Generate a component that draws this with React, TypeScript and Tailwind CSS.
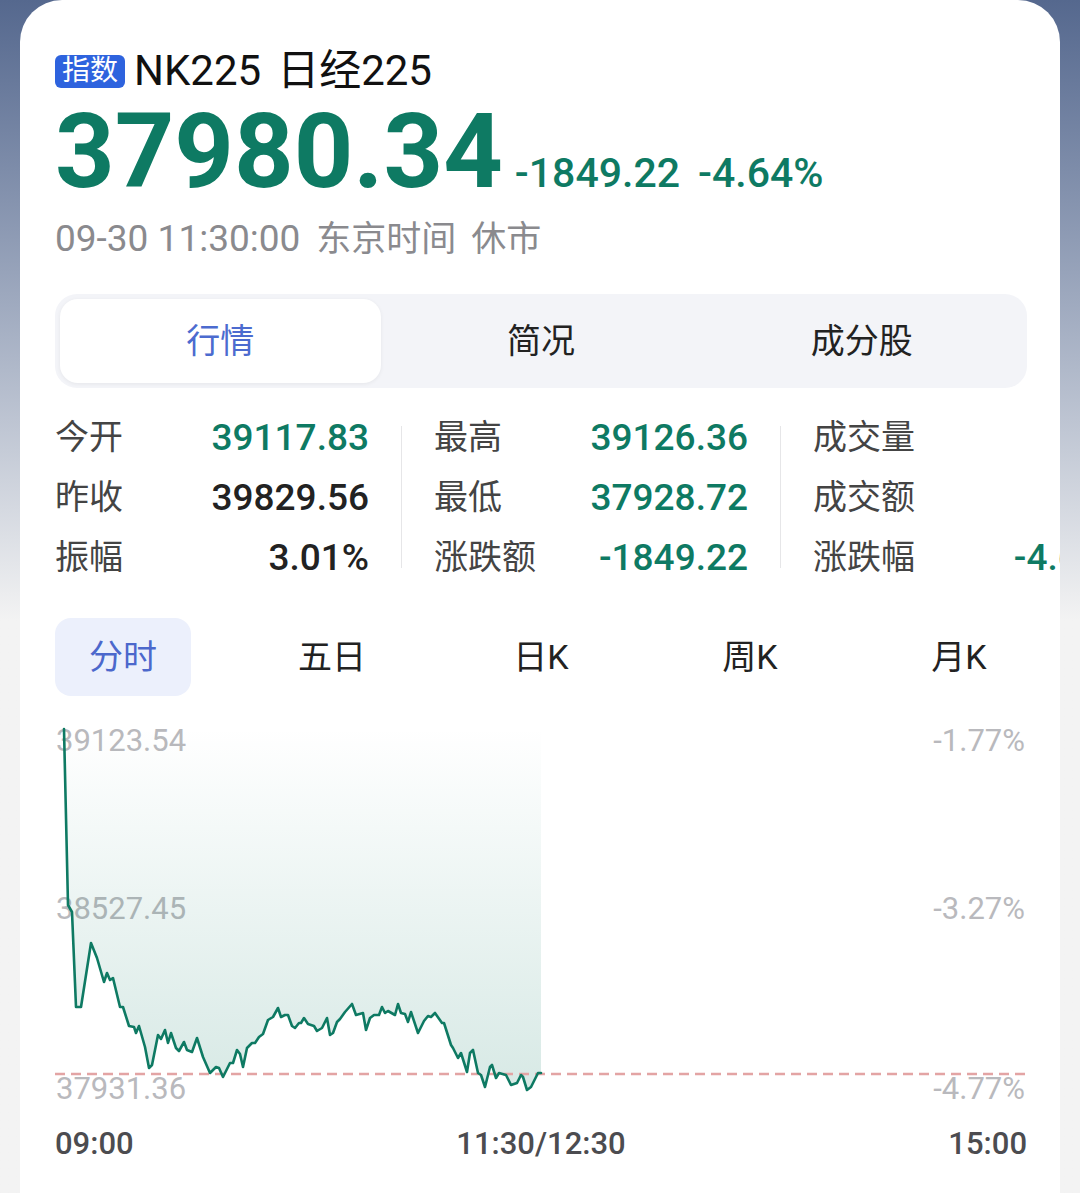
import React from 'react';

const GREEN = 'text-[#0e7a63]';

const linePoints: [number, number][] = [
  [64, 729], [68, 905], [72, 912], [76, 1007], [81, 1007], [91, 943], [97, 958], [104, 982],
  [107, 973], [110, 980], [113, 978], [120, 1007], [123, 1007], [129, 1026], [134, 1027],
  [136, 1033], [139, 1026], [145, 1047], [149, 1068], [152, 1065], [158, 1035], [161, 1039],
  [165, 1030], [168, 1043], [171, 1033], [176, 1048], [179, 1051], [184, 1042], [187, 1050],
  [192, 1052], [197, 1038], [203, 1057], [210, 1073], [216, 1067], [219, 1068], [223, 1077],
  [230, 1063], [233, 1063], [237, 1050], [240, 1054], [243, 1067], [247, 1048], [252, 1043],
  [255, 1043], [259, 1037], [263, 1034], [268, 1020], [273, 1017], [278, 1008], [281, 1017],
  [285, 1015], [288, 1015], [292, 1026], [295, 1028], [299, 1023], [301, 1023], [304, 1018],
  [308, 1024], [314, 1026], [317, 1031], [322, 1028], [327, 1018], [330, 1035], [333, 1033],
  [337, 1022], [340, 1019], [345, 1012], [352, 1004], [356, 1015], [363, 1013], [366, 1030],
  [370, 1018], [374, 1015], [379, 1015], [382, 1007], [385, 1013], [388, 1011], [395, 1015],
  [398, 1004], [401, 1013], [405, 1014], [408, 1022], [411, 1012], [418, 1033], [424, 1021],
  [428, 1016], [431, 1017], [435, 1013], [442, 1023], [444, 1023], [451, 1045], [453, 1048],
  [458, 1058], [461, 1053], [467, 1072], [470, 1053], [473, 1050], [478, 1073], [481, 1075],
  [485, 1087], [490, 1067], [492, 1065], [496, 1078], [499, 1073], [506, 1075], [511, 1085],
  [517, 1083], [521, 1075], [523, 1077], [527, 1090], [531, 1087], [538, 1073], [541, 1073],
];

// third column runs past the card edge, like the real screen
const stats = [
  [
    { label: '今开', value: '39117.83', green: true },
    { label: '昨收', value: '39829.56', green: false },
    { label: '振幅', value: '3.01%', green: false },
  ],
  [
    { label: '最高', value: '39126.36', green: true },
    { label: '最低', value: '37928.72', green: true },
    { label: '涨跌额', value: '-1849.22', green: true },
  ],
  [
    { label: '成交量', value: '', green: false },
    { label: '成交额', value: '', green: false },
    { label: '涨跌幅', value: '-4.64%', green: true },
  ],
];

const infoTabs = ['行情', '简况', '成分股'];
const chartTabs = ['分时', '五日', '日K', '周K', '月K'];

const PriceChart: React.FC = () => {
  const line = linePoints.map(([x, y], i) => `${i === 0 ? 'M' : 'L'}${x},${y}`).join(' ');
  const area = `${line} L541,728 L64,728 Z`;

  return (
    <div className="relative h-[396px] mt-[16px]">
      <span className="absolute left-[1px] top-[13px] text-[31px] leading-none text-[#b9b9bd]">39123.54</span>
      <span className="absolute left-[1px] top-[181px] text-[31px] leading-none text-[#b9b9bd]">38527.45</span>
      <span className="absolute left-[1px] top-[361px] text-[31px] leading-none text-[#b9b9bd]">37931.36</span>
      <span className="absolute right-[2px] top-[13px] text-[31px] leading-none text-[#b9b9bd]">-1.77%</span>
      <span className="absolute right-[2px] top-[181px] text-[31px] leading-none text-[#b9b9bd]">-3.27%</span>
      <span className="absolute right-[2px] top-[361px] text-[31px] leading-none text-[#b9b9bd]">-4.77%</span>

      <svg className="relative block" width="972" height="396" viewBox="55 712 972 396">
        <defs>
          <linearGradient id="areaFill" gradientUnits="userSpaceOnUse" x1="0" y1="728" x2="0" y2="1080">
            <stop offset="0" stopColor="#0e7a63" stopOpacity="0" />
            <stop offset="1" stopColor="#0e7a63" stopOpacity="0.16" />
          </linearGradient>
        </defs>
        <path d={area} fill="url(#areaFill)" />
        <line x1="55" y1="1074" x2="1027" y2="1074" stroke="#e3a4a4" strokeWidth="2.5" strokeDasharray="10 6" />
        <path d={line} fill="none" stroke="#0e7a63" strokeWidth="2.6" strokeLinejoin="round" strokeLinecap="round" />
      </svg>
    </div>
  );
};

const App: React.FC = () => {
  return (
    <div className="h-[1193px] overflow-hidden px-[20px] bg-linear-to-b from-[#55688e] to-[#f3f3f3] to-52% font-['Roboto','Noto_Sans_CJK_SC',sans-serif]">
      <div className="h-full bg-white rounded-t-[42px] overflow-hidden pt-[50px] pl-[35px] pr-[33px]">
        {/* title */}
        <div className="flex items-center h-[42px]">
          <span className="h-[33px] px-[7px] flex items-center rounded-[6px] bg-[#2e63de] text-white text-[28px] leading-none">
            指数
          </span>
          <span className="ml-[9px] text-[42px] leading-none text-[#111]">NK225</span>
          <span className="ml-[16px] text-[42px] leading-none text-[#111]">日经225</span>
        </div>

        {/* price */}
        <div className={`flex items-baseline mt-[8px] ${GREEN}`}>
          <span className="text-[104px] leading-none font-bold">37980.34</span>
          <span className="ml-[12px] text-[41px] leading-none font-medium">-1849.22</span>
          <span className="ml-[18px] text-[41px] leading-none font-medium">-4.64%</span>
        </div>

        {/* time */}
        <div className="flex items-baseline mt-[16px] text-[#8a8a8e] leading-none">
          <span className="text-[37px]">09-30 11:30:00</span>
          <span className="ml-[16px] text-[35px]">东京时间</span>
          <span className="ml-[15px] text-[35px]">休市</span>
        </div>

        {/* segmented tabs */}
        <div className="mt-[37px] h-[94px] p-[5px] rounded-[22px] bg-[#f3f4f8] grid grid-cols-3">
          {infoTabs.map((tab, i) => (
            <div
              key={tab}
              className={`flex items-center justify-center text-[34px] leading-none rounded-[18px] ${
                i === 0
                  ? 'bg-white text-[#4c6bcf] shadow-[0_1px_4px_rgba(0,0,0,0.06)]'
                  : 'text-[#222]'
              }`}
            >
              {tab}
            </div>
          ))}
        </div>

        {/* stats */}
        <div className="mt-[19px] flex items-center">
          {stats.map((col, ci) => (
            <React.Fragment key={ci}>
              {ci > 0 && <div className="w-px h-[142px] mx-[32px] bg-[#e6e6e8] shrink-0" />}
              <div className="w-[314px] shrink-0 flex flex-col">
                {col.map((row) => (
                  <div key={row.label} className="h-[60px] flex items-center justify-between">
                    <span className="text-[34px] leading-none text-[#444]">{row.label}</span>
                    <span
                      className={`text-[37px] leading-none font-medium ${
                        row.green ? GREEN : 'text-[#222]'
                      }`}
                    >
                      {row.value}
                    </span>
                  </div>
                ))}
              </div>
            </React.Fragment>
          ))}
        </div>

        {/* chart tabs */}
        <div className="mt-[31px] flex justify-between">
          {chartTabs.map((tab, i) => (
            <div
              key={tab}
              className={`w-[136px] h-[78px] flex items-center justify-center rounded-[16px] text-[34px] leading-none ${
                i === 0 ? 'bg-[#ecf0fc] text-[#4c68cc]' : 'text-[#222]'
              }`}
            >
              {tab}
            </div>
          ))}
        </div>

        <PriceChart />

        {/* time axis */}
        <div className="mt-[20px] flex justify-between text-[31px] leading-none font-medium text-[#4c4c50]">
          <span>09:00</span>
          <span>11:30/12:30</span>
          <span>15:00</span>
        </div>
      </div>
    </div>
  );
};

export default App;
